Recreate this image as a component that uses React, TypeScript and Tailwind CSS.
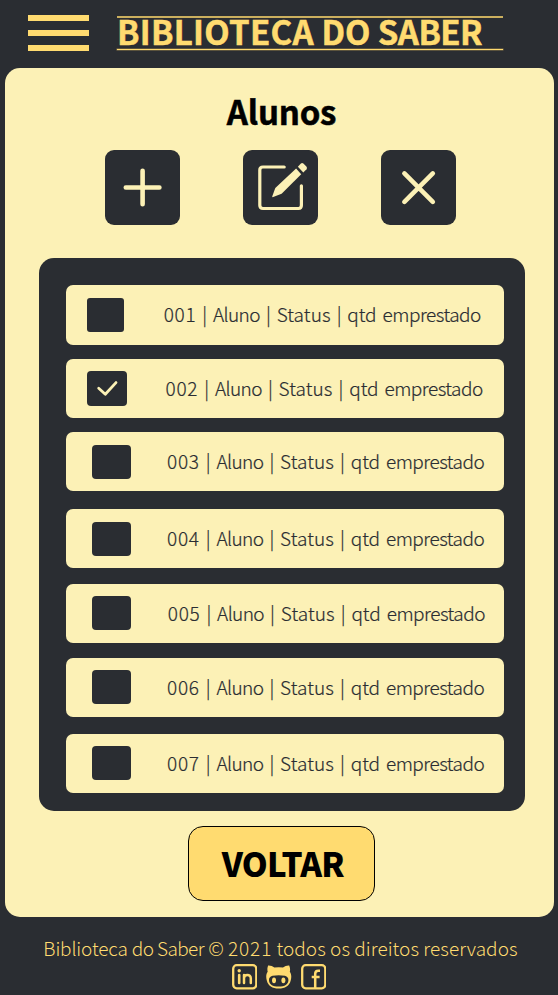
import React from "react";

type Student = {
  id: string;
  checked?: boolean;
  row: string;
  box: string;
  label: string;
};

const students: Student[] = [
  { id: "001", row: "h-[60.5px] pl-[21.3px]", box: "w-[36.3px] h-[34px] rounded-[3px]", label: "ml-[40.1px]" },
  { id: "002", checked: true, row: "mt-[14px] h-[59px] pl-[21.3px]", box: "w-[39.7px] h-[34.5px] rounded-[4px]", label: "ml-[38.6px]" },
  { id: "003", row: "mt-[14px] h-[59px] pl-[26px]", box: "w-[39px] h-[34px] rounded-[4px]", label: "ml-[36.1px]" },
  { id: "004", row: "mt-[18.4px] h-[59px] pl-[26px]", box: "w-[39px] h-[34px] rounded-[4px]", label: "ml-[36.1px]" },
  { id: "005", row: "mt-[15.4px] h-[59px] pl-[26px]", box: "w-[39px] h-[34px] rounded-[4px]", label: "ml-[36.8px]" },
  { id: "006", row: "mt-[15.2px] h-[59px] pl-[26px]", box: "w-[39px] h-[34px] rounded-[4px]", label: "ml-[36.1px]" },
  { id: "007", row: "mt-[17px] h-[59px] pl-[26px]", box: "w-[39px] h-[34px] rounded-[4px]", label: "ml-[36.1px]" },
];

function ActionButton({ label, children }: { label: string; children: React.ReactNode }) {
  return (
    <button aria-label={label} className="size-[75px] shrink-0 rounded-[9px] bg-[#2a2d32] text-[#fcf1b6]">
      <svg viewBox="0 0 75 75" className="size-full" fill="none" stroke="currentColor">
        {children}
      </svg>
    </button>
  );
}

function StudentRow({ s }: { s: Student }) {
  return (
    <li className={`flex items-center rounded-[7px] bg-[#fcf1b6] ${s.row}`}>
      <span className={`shrink-0 bg-[#2a2d32] ${s.box}`}>
        {s.checked && (
          <svg viewBox="0 0 39.7 34.5" className="size-full" fill="none" stroke="#fcf1b6" strokeWidth="2.8" strokeLinecap="round" strokeLinejoin="round">
            <path d="M11.7 17.2 L18.3 23.2 L29 11.6" />
          </svg>
        )}
      </span>
      <span className={`whitespace-nowrap pb-[2.5px] text-[19px] font-light leading-none tracking-[-0.25px] [-webkit-text-stroke:0.2px_#2a2d32] [word-spacing:2.1px] text-[#2a2d32] ${s.label}`}>
        <span className="tracking-[0.7px]">{s.id}</span> | <span className="tracking-[-0.6px]">Aluno</span> | <span className="tracking-[0.1px]">Status</span> |{" "}
        <span className="tracking-[-0.1px]">qtd</span> <span className="tracking-[-0.5px]">emprestado</span>
      </span>
    </li>
  );
}

export default function App() {
  return (
    <div className="flex h-[995px] w-[558px] flex-col overflow-hidden bg-[#2a2d32] font-['Noto_Sans_CJK_JP','Noto_Sans',sans-serif]">
      <header className="flex h-[67.5px] shrink-0 items-start pl-[28.4px]">
        <button aria-label="Menu" className="mt-[15px] flex w-[60.4px] flex-col gap-[9px]">
          <span className="h-[6px] bg-[#ffdb70]" />
          <span className="h-[6px] bg-[#ffdb70]" />
          <span className="h-[6px] bg-[#ffdb70]" />
        </button>
        <div className="ml-[28.2px] mt-[16px] flex h-[34px] w-[385.6px] flex-col justify-between">
          <div className="h-[2px] shrink-0 bg-[#cbaf5e]" />
          <h1 className="whitespace-nowrap pb-[5px] text-[33px] font-bold leading-[24px] [-webkit-text-stroke:0.5px_#ffdb70] text-[#ffdb70]">
            <span className="tracking-[0.3px]">BIBLIOTECA</span> DO <span className="tracking-[-0.6px]">SABER</span>
          </h1>
          <div className="h-px shrink-0 bg-[#ffdb70] shadow-[0_0_0_0.5px_#8c7a49]" />
        </div>
      </header>

      <main className="ml-[4.5px] flex h-[849px] w-[549px] shrink-0 flex-col items-center rounded-[15px] bg-[#fcf1b6]">
        <h2 className="ml-[5px] mt-[23.5px] h-[40px] text-[33px] font-bold leading-[40px] tracking-[-0.2px] [-webkit-text-stroke:0.5px_#000] text-black">Alunos</h2>
        <div className="ml-[3px] mt-[19px] flex gap-[63px]">
          <ActionButton label="Adicionar">
            <path d="M37.6 20.7V54.3M20.8 37.5H54.4" strokeWidth="4.6" strokeLinecap="round" />
          </ActionButton>
          <ActionButton label="Editar">
            <path d="M41.2 17H20C18 17 16.8 18.2 16.8 20V55.3C16.8 57.5 18 58.5 20 58.5H55.5C57.5 58.5 58.4 57.4 58.4 55.3V35.8" strokeWidth="3.2" strokeLinecap="round" />
            <path d="M53.1 18.5L58.2 24.2L38.6 43.7L30.2 47.1Q29 47.5 29.3 46.2L32.3 37.9Z" fill="currentColor" stroke="none" />
            <path d="M54.9 16.8L57.7 13.8Q59 12.5 60.4 13.6L63.4 16.6Q64.6 18 63.5 19.3L60.3 22.6Z" fill="currentColor" stroke="none" />
          </ActionButton>
          <ActionButton label="Remover">
            <path d="M23.4 23.4L51.8 51.8M51.8 23.4L23.4 51.8" strokeWidth="4.6" strokeLinecap="round" />
          </ActionButton>
        </div>

        <ul className="ml-[6px] mt-[33px] flex h-[553.3px] w-[486px] shrink-0 flex-col rounded-[15px] bg-[#2a2d32] pl-[27px] pr-[21px] pt-[26.5px]">
          {students.map((s) => (
            <StudentRow key={s.id} s={s} />
          ))}
        </ul>

        <button className="ml-[4.6px] mt-[15.2px] h-[74.5px] w-[187.6px] shrink-0 rounded-[15px] border-[1.5px] border-black bg-[#ffdb70] pb-[0.6px] pl-[3px] text-[33px] font-black leading-none tracking-[-0.8px] text-black">
          VOLTAR
        </button>
      </main>

      <footer className="flex flex-col items-center pt-[20px] text-[#ffdb70]">
        <p className="ml-[3px] whitespace-nowrap text-[19px] font-light leading-[22px]">
          <span className="tracking-[-0.15px]">Biblioteca</span> <span className="tracking-[-0.6px]">do Saber</span> ©{" "}
          <span className="tracking-[0.9px]">2021</span> <span className="tracking-[0.05px]">todos os direitos reservados</span>
        </p>
        <div className="mt-[5.5px] flex gap-[9px]">
          <svg viewBox="0 0 25.5 25.5" className="h-[25.5px] w-[25.5px]" fill="none" stroke="currentColor" strokeWidth="2.3" strokeLinecap="round">
            <rect x="1.2" y="1.2" width="23.1" height="23.1" rx="3.5" />
            <path d="M7.2 11V19" strokeWidth="2.6" />
            <circle cx="7.2" cy="6.7" r="1.7" fill="currentColor" stroke="none" />
            <path d="M12 11V19M12 14.3C12 10 18.8 9.8 18.8 14.3V19" strokeWidth="2.5" />
          </svg>
          <svg viewBox="0 0 25.5 25.5" className="h-[25.5px] w-[25.5px]" fill="currentColor">
            <path fillRule="evenodd" d="M2.1 1.5Q5.8 1.3 8.4 3.6Q12.7 2.7 17 3.6Q19.8 1.2 23.2 1.5Q24.6 5 23.8 7.8C25.4 10.1 25.7 13 24.7 16.5C23.4 22 19 24.6 12.7 24.6S2.1 22 .8 16.5C-.2 13 .1 10.1 1.7 7.8Q.9 5 2.1 1.5ZM6.5 11.8C3.8 12.4 2.9 14.4 3 16.2C3.2 20.3 6.5 22.5 12.7 22.5S22.2 20.3 22.4 16.2C22.5 14.4 21.6 12.4 18.9 11.8Q12.7 10.8 6.5 11.8Z" />
            <ellipse cx="8" cy="16.3" rx="2" ry="2.9" />
            <ellipse cx="17.4" cy="16.3" rx="2" ry="2.9" />
          </svg>
          <svg viewBox="0 0 25.5 25.5" className="h-[25.5px] w-[25.5px]" fill="none" stroke="currentColor" strokeWidth="2.3">
            <rect x="1.2" y="1.2" width="23.1" height="23.1" rx="3.5" />
            <path d="M14.2 24V9.8Q14.2 6.7 17.3 6.7H19M10.7 13.1H18.6" strokeWidth="2.5" />
          </svg>
        </div>
      </footer>
    </div>
  );
}
